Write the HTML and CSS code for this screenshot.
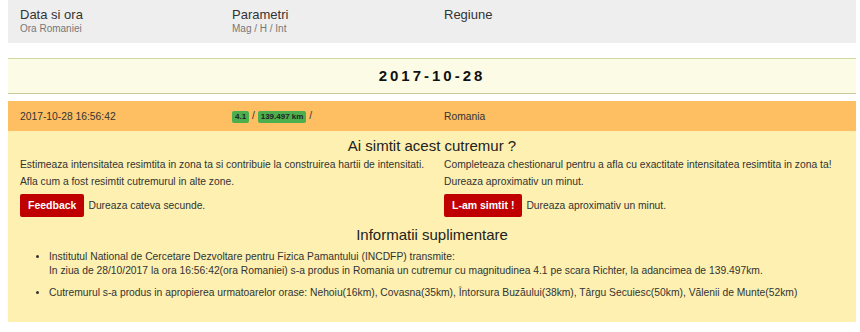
FILE: index.html
```html
<!DOCTYPE html>
<html lang="ro">
<head>
  <meta charset="UTF-8" />
  <title>Cutremure</title>
  <link rel="stylesheet" href="styles.css">
</head>
<body>
  <div class="wrap">
    <div class="head-row">
      <div class="col">
        <div class="h-title">Data si ora</div>
        <div class="h-sub">Ora Romaniei</div>
      </div>
      <div class="col">
        <div class="h-title">Parametri</div>
        <div class="h-sub">Mag / H / Int</div>
      </div>
      <div class="col">
        <div class="h-title">Regiune</div>
      </div>
      <div class="col"></div>
    </div>

    <div class="day-bar">2017-10-28</div>

    <div class="quake-row">
      <div class="col">2017-10-28 16:56:42</div>
      <div class="col"><span class="badge">4.1</span> / <span class="badge">139.497 km</span> /</div>
      <div class="col">Romania</div>
      <div class="col"></div>
    </div>

    <div class="quake-panel">
      <h3>Ai simtit acest cutremur ?</h3>
      <div class="halves">
        <div class="half">
          <p>Estimeaza intensitatea resimtita in zona ta si contribuie la construirea hartii de intensitati.<br>Afla cum a fost resimtit cutremurul in alte zone.</p>
          <div class="action"><a class="btn">Feedback</a> Dureaza cateva secunde.</div>
        </div>
        <div class="half">
          <p>Completeaza chestionarul pentru a afla cu exactitate intensitatea resimtita in zona ta!<br>Dureaza aproximativ un minut.</p>
          <div class="action"><a class="btn">L-am simtit !</a> Dureaza aproximativ un minut.</div>
        </div>
      </div>
      <h3>Informatii suplimentare</h3>
      <ul class="info">
        <li>Institutul National de Cercetare Dezvoltare pentru Fizica Pamantului (INCDFP) transmite:<br>In ziua de 28/10/2017 la ora 16:56:42(ora Romaniei) s-a produs in Romania un cutremur cu magnitudinea 4.1 pe scara Richter, la adancimea de 139.497km.</li>
        <li>Cutremurul s-a produs in apropierea urmatoarelor orase: Nehoiu(16km), Covasna(35km), Întorsura Buzăului(38km), Târgu Secuiesc(50km), Vălenii de Munte(52km)</li>
      </ul>
    </div>
  </div>
</body>
</html>
```

FILE: styles.css
```css
body {
  margin: 0;
  font-family: "Liberation Sans", Arial, sans-serif;
  font-size: 10.3px;
  color: #333;
  background: #fff;
}

.wrap {
  margin: 0 4px 0 8px;
}

.head-row,
.quake-row {
  display: grid;
  grid-template-columns: repeat(4, 1fr);
}

.col {
  padding: 0 12px;
}

.head-row {
  background: #eeeeee;
  height: 43px;
  padding-top: 7px;
  box-sizing: border-box;
}

.h-title {
  font-size: 13px;
  color: #333;
  line-height: 15px;
}

.h-sub {
  font-size: 10px;
  color: #777;
  line-height: 13px;
}

.day-bar {
  margin-top: 15px;
  height: 34px;
  line-height: 34px;
  background: #fcfce6;
  border-top: 1px solid #cfd8a0;
  border-bottom: 1px solid #c8c89a;
  text-align: center;
  font-size: 15px;
  font-weight: bold;
  letter-spacing: 3px;
  color: #111;
}

.quake-row {
  margin-top: 7px;
  background: #fdbf62;
  height: 30px;
  align-items: center;
  color: #333;
}

.badge {
  display: inline-block;
  background: #4cae4c;
  color: #222;
  font-size: 8px;
  font-weight: bold;
  padding: 1px 3px;
  border-radius: 2px;
  line-height: 10px;
}

.quake-panel {
  background: #fdf0b0;
  padding: 6px 0 14px;
  box-shadow: 0 1px 1px rgba(0, 0, 0, 0.08);
}

.quake-panel h3 {
  margin: 0;
  font-size: 15px;
  font-weight: normal;
  text-align: center;
  color: #222;
  line-height: 18px;
}

.halves {
  display: grid;
  grid-template-columns: 1fr 1fr;
  margin-top: 1px;
}

.half {
  padding: 0 4px 0 12px;
}

.half p {
  margin: 0;
  line-height: 17px;
}

.action {
  margin-top: 4px;
  margin-bottom: 9px;
  display: flex;
  align-items: center;
  gap: 4px;
}

.btn {
  display: inline-block;
  background: #c00000;
  color: #fff;
  font-weight: bold;
  font-size: 10.5px;
  padding: 0 8px;
  height: 23px;
  line-height: 23px;
  border-radius: 2px;
}

.info {
  margin: 6px 0 0;
  padding-left: 41px;
}

.info li {
  line-height: 14px;
  margin-bottom: 8px;
}
```
